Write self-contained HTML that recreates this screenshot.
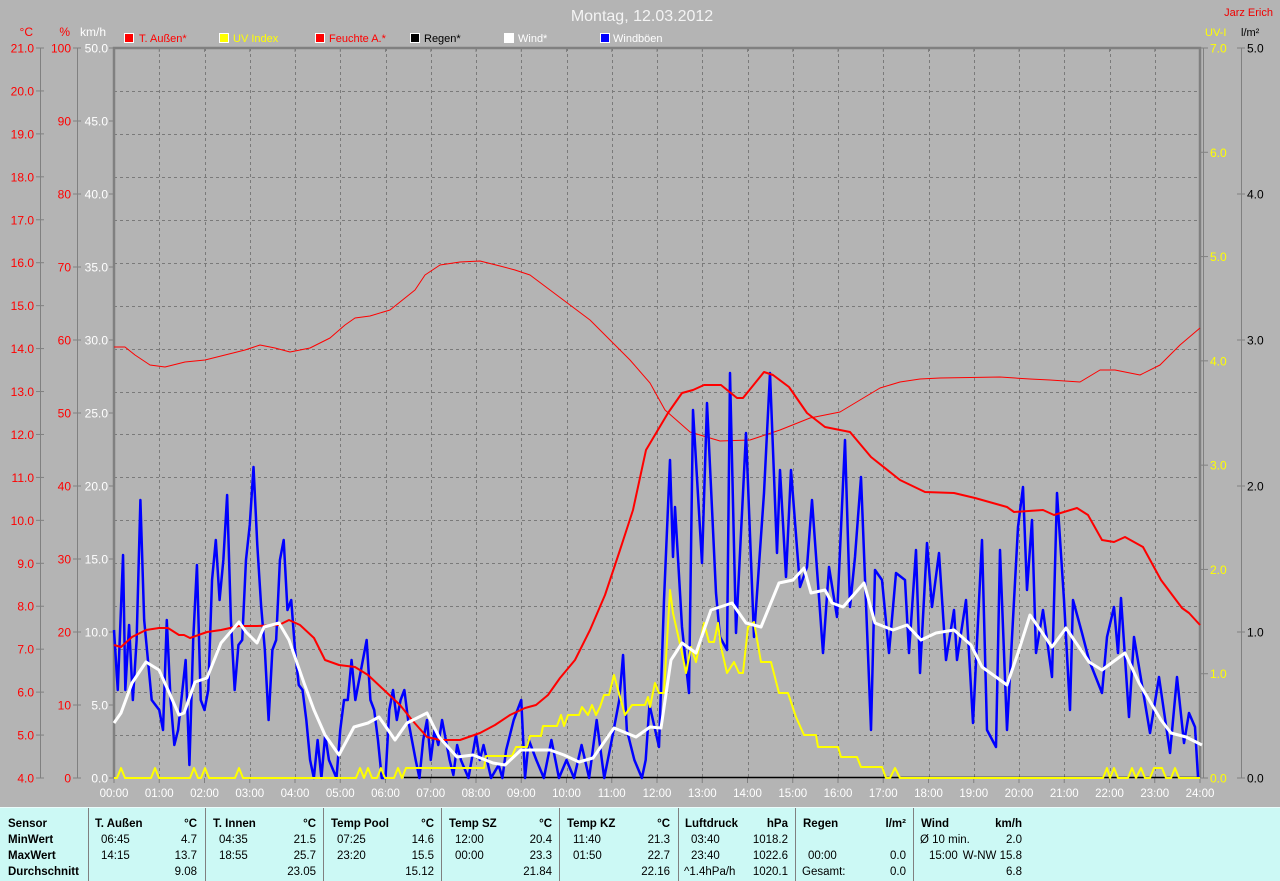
<!DOCTYPE html>
<html><head><meta charset="utf-8"><style>
html,body{margin:0;padding:0;background:#b4b4b4;width:1280px;height:881px;overflow:hidden}
svg{display:block;font-family:"Liberation Sans",Arial,sans-serif}
</style></head><body>
<svg id="s" width="1280" height="881" viewBox="0 0 1280 881" xmlns="http://www.w3.org/2000/svg">
<rect width="1280" height="881" fill="#b4b4b4"/>
<text x="642" y="21" fill="#f4f4f4" font-size="16" text-anchor="middle">Montag, 12.03.2012</text>
<text x="1273" y="16" fill="#f00000" font-size="11" text-anchor="end">Jarz Erich</text>
<g font-size="12">
<text x="33" y="36" fill="#f00" text-anchor="end">°C</text>
<text x="70" y="36" fill="#f00" text-anchor="end">%</text>
<text x="106" y="36" fill="#fff" text-anchor="end">km/h</text>
<text x="1205" y="36" fill="#ff0" font-size="11">UV-I</text>
<text x="1241" y="36" fill="#000" font-size="11">l/m²</text>
</g>
<g font-size="11">
<rect x="124.5" y="33.5" width="9" height="9" fill="#f00" stroke="#fff"/><text x="139" y="42" fill="#f00">T. Außen*</text>
<rect x="219.5" y="33.5" width="9" height="9" fill="#ff0" stroke="#fff"/><text x="233" y="42" fill="#ff0">UV Index</text>
<rect x="315.5" y="33.5" width="9" height="9" fill="#f00" stroke="#fff"/><text x="329" y="42" fill="#f00">Feuchte A.*</text>
<rect x="410.5" y="33.5" width="9" height="9" fill="#000" stroke="#fff"/><text x="424" y="42" fill="#000">Regen*</text>
<rect x="504.5" y="33.5" width="9" height="9" fill="#fff" stroke="#fff"/><text x="518" y="42" fill="#fff">Wind*</text>
<rect x="600.5" y="33.5" width="9" height="9" fill="#00f" stroke="#fff"/><text x="613" y="42" fill="#fff">Windböen</text>
</g>
<g id="grid" stroke="#7a7a7a" stroke-dasharray="3,3" stroke-width="1"></g>
<g id="axes"></g>
<g id="data" fill="none" stroke-linejoin="round"></g>
<rect x="0" y="807" width="1280" height="74" fill="#ccf9f5"/>
<line x1="0" y1="807.5" x2="1280" y2="807.5" stroke="#eafcfb"/>
<g id="tbl" font-size="11.5"></g>
</svg>
<script>
var NS="http://www.w3.org/2000/svg";
function el(p,t,a,txt){var e=document.createElementNS(NS,t);for(var k in a)e.setAttribute(k,a[k]);if(txt!=null)e.textContent=txt;document.getElementById(p).appendChild(e);return e;}
var X0=114,X1=1200,Y0=48,Y1=778;
function hx(h){return X0+h*(X1-X0)/24;}
for(var i=1;i<24;i++){var x=Math.round(hx(i))+0.5;el('grid','line',{x1:x,y1:Y0,x2:x,y2:Y1});}
for(var i=1;i<17;i++){var y=Math.round(Y0+i*730/17)+0.5;el('grid','line',{x1:X0,y1:y,x2:X1,y2:y});}
var A='axes';
el(A,'line',{x1:40.5,y1:Y0,x2:40.5,y2:Y1,stroke:'#808080'});
el(A,'line',{x1:77.5,y1:Y0,x2:77.5,y2:Y1,stroke:'#808080'});
el(A,'line',{x1:1241.5,y1:Y0,x2:1241.5,y2:Y1,stroke:'#808080'});
el(A,'line',{x1:1203.5,y1:Y0,x2:1203.5,y2:Y1,stroke:'#808080'});
el(A,'polyline',{points:'114,778 114,48 1200,48 1200,778',fill:'none',stroke:'#808080','stroke-width':2.5});
for(var i=0;i<=17;i++){var y=Y0+i*730/17;var v=(21-i).toFixed(1);
 el(A,'line',{x1:36,y1:y,x2:44,y2:y,stroke:'#808080'});
 el(A,'text',{x:34,y:y+4.5,fill:'#f00','font-size':12,'text-anchor':'end'},v);}
for(var i=0;i<=10;i++){var y=Y0+i*73;
 el(A,'line',{x1:73,y1:y,x2:81,y2:y,stroke:'#808080'});
 el(A,'text',{x:71,y:y+4.5,fill:'#f00','font-size':12,'text-anchor':'end'},String(100-i*10));
 el(A,'line',{x1:109,y1:y,x2:114,y2:y,stroke:'#808080'});
 el(A,'text',{x:108,y:y+4.5,fill:'#fff','font-size':12,'text-anchor':'end'},(50-i*5).toFixed(1));}
for(var i=0;i<=7;i++){var y=Y0+i*730/7;
 el(A,'line',{x1:1201,y1:y,x2:1208,y2:y,stroke:'#808080'});
 el(A,'text',{x:1210,y:y+4.5,fill:'#ff0','font-size':12},(7-i).toFixed(1));}
for(var i=0;i<=5;i++){var y=Y0+i*146;
 el(A,'line',{x1:1237,y1:y,x2:1245,y2:y,stroke:'#808080'});
 el(A,'text',{x:1247,y:y+4.5,fill:'#000','font-size':12},(5-i).toFixed(1));}
for(var i=0;i<=24;i++){var x=hx(i);
 el(A,'line',{x1:x,y1:48,x2:x,y2:52,stroke:'#808080'});
 el(A,'line',{x1:x,y1:778,x2:x,y2:783,stroke:'#808080'});
 el(A,'text',{x:x,y:797,fill:'#fff','font-size':11.5,'text-anchor':'middle'},(i<10?'0':'')+i+':00');}
function pl(pts,col,w){el('data','polyline',{points:pts.map(function(p){return p.join(',')}).join(' '),stroke:col,'stroke-width':w});}
function H(h,m){return hx(h+m/60);}
var hum=[[114,347],[125,347],[135,355],[150,365],[165,367],[185,362],[205,360],[225,355],[245,350],[260,345],[275,348],[290,352],[310,348],[330,338],[345,325],[355,318],[370,316],[390,310],[405,298],[415,290],[425,275],[440,265],[460,262],[480,261],[500,266],[515,270],[530,275],[550,290],[570,305],[590,320],[610,340],[630,360],[650,383],[665,410],[690,432],[720,441],[750,440],[780,430],[810,418],[840,412],[860,400],[880,388],[900,382],[920,379],[940,378],[1000,377],[1030,379],[1050,380],[1080,382],[1100,370],[1115,370],[1140,375],[1160,365],[1180,345],[1200,328]];
pl(hum,'#f00',1);
el('data','line',{x1:404,y1:777.5,x2:1200,y2:777.5,stroke:'#000','stroke-width':1.5});
var gm=[[0,0,630],[0,5,690],[0,12,555],[0,15,690],[0,20,625],[0,25,700],[0,30,640],[0,35,500],[0,40,620],[0,50,700],[1,0,710],[1,5,730],[1,10,620],[1,15,700],[1,20,745],[1,25,730],[1,35,660],[1,40,765],[1,45,640],[1,50,565],[1,55,700],[2,0,710],[2,5,690],[2,10,580],[2,15,540],[2,20,600],[2,25,560],[2,30,495],[2,35,620],[2,40,690],[2,45,645],[2,50,640],[2,55,560],[3,0,525],[3,5,467],[3,10,545],[3,15,605],[3,20,650],[3,25,720],[3,30,650],[3,35,640],[3,40,560],[3,45,540],[3,50,610],[3,55,600],[4,0,650],[4,5,685],[4,10,690],[4,15,720],[4,20,760],[4,25,778],[4,30,740],[4,35,778],[4,40,735],[4,45,760],[4,55,778],[5,0,730],[5,5,700],[5,10,700],[5,15,660],[5,20,700],[5,30,660],[5,35,640],[5,40,700],[5,45,710],[5,50,740],[5,55,778],[6,0,778],[6,5,710],[6,10,690],[6,15,720],[6,20,700],[6,25,690],[6,30,720],[6,40,760],[6,45,778],[6,50,740],[6,55,720],[7,0,760],[7,5,730],[7,10,745],[7,15,720],[7,25,760],[7,30,775],[7,35,745],[7,40,760],[7,50,778],[8,0,735],[8,5,760],[8,10,745],[8,20,778],[8,30,765],[8,35,778],[8,40,750],[8,50,720],[9,0,700],[9,5,778],[9,10,740],[9,20,760],[9,30,778],[9,40,740],[9,50,778],[10,0,760],[10,10,778],[10,20,745],[10,30,778],[10,40,720],[10,50,778],[11,0,740],[11,10,700],[11,15,655],[11,20,730],[11,30,760],[11,40,778],[11,45,760],[11,50,705]];
var gust=gm.map(function(a){return [H(a[0],a[1]),a[2]];});
gust=gust.concat([[650,707],[659,747],[664,600],[670,460],[673,557],[675,507],[682,627],[689,693],[693,410],[702,563],[707,403],[716,593],[720,637],[727,650],[730,373],[736,633],[746,433],[754,637],[764,493],[770,373],[777,553],[780,470],[786,577],[791,470],[800,587],[807,567],[812,500],[823,653],[829,567],[837,617],[845,440],[850,607],[855,557],[861,477],[871,730],[875,570],[882,580],[889,653],[896,573],[905,580],[909,653],[916,550],[920,673],[927,543],[932,607],[939,553],[946,660],[954,610],[957,660],[966,600],[973,723],[982,540],[987,730],[996,747],[1000,550],[1007,730],[1018,527],[1023,487],[1027,590],[1032,520],[1036,653],[1043,610],[1052,677],[1057,493],[1064,600],[1070,710],[1073,600],[1082,633],[1089,660],[1102,693],[1107,637],[1114,607],[1118,653],[1121,598],[1129,717],[1134,637],[1150,733],[1159,677],[1170,753],[1177,677],[1184,743],[1189,713],[1195,727],[1198,777]]);
pl(gust,'#0000ff',2.5);
var uv=[[114,778]];
[121,155,194,205,239,360,368,381,398].forEach(function(x){uv.push([x-4,778],[x,768],[x+4,778]);});
uv=uv.concat([[406,768],[484,768],[486,756],[512,756],[516,747],[527,747],[530,736],[541,736],[543,726],[557,726],[561,715],[564,726],[568,715],[579,715],[582,707],[588,715],[592,705],[596,715],[600,707],[604,695],[609,695],[614,675],[625,715],[632,705],[645,705],[648,697],[650,707],[655,683],[659,693],[664,693],[670,590],[673,613],[682,653],[686,673],[691,647],[696,662],[704,623],[709,642],[714,642],[718,623],[721,647],[727,673],[734,662],[739,673],[743,673],[748,627],[754,622],[761,662],[771,662],[779,693],[788,693],[796,717],[804,735],[816,735],[818,747],[838,747],[841,757],[857,757],[861,767],[882,767],[886,778],[890,778],[895,768],[900,778],[1103,778],[1107,768],[1110,778],[1114,768],[1118,778],[1128,778],[1132,768],[1136,778],[1141,768],[1145,778],[1150,778],[1154,768],[1162,768],[1166,778],[1171,778],[1175,768],[1179,778],[1200,778]]);
pl(uv,'#ffff00',2);
var tmp=[[114,645],[121,647],[132,637],[146,630],[159,628],[168,628],[179,635],[184,635],[190,638],[207,632],[221,630],[239,626],[257,626],[279,625],[289,620],[300,625],[314,638],[325,660],[339,665],[355,667],[368,675],[384,690],[400,705],[412,720],[427,737],[440,740],[460,740],[480,733],[495,725],[510,715],[525,708],[536,705],[548,695],[560,678],[575,660],[590,630],[605,595],[620,550],[633,510],[646,450],[668,413],[682,393],[693,390],[704,385],[721,385],[737,398],[743,398],[764,372],[773,375],[789,387],[807,413],[825,427],[850,432],[871,457],[900,480],[925,492],[954,493],[975,498],[1007,507],[1014,512],[1043,510],[1054,515],[1077,508],[1088,515],[1102,540],[1114,542],[1125,537],[1143,547],[1161,580],[1182,608],[1189,613],[1200,625]];
pl(tmp,'#f00',2);
var wd=[[114,723],[121,713],[132,683],[146,662],[159,670],[168,690],[179,715],[184,713],[195,682],[207,678],[221,643],[239,622],[246,632],[257,643],[264,627],[279,623],[289,640],[304,683],[314,710],[325,735],[339,755],[354,727],[368,723],[379,717],[395,740],[407,723],[427,713],[439,737],[457,757],[473,755],[493,763],[505,765],[521,750],[550,750],[564,755],[579,762],[593,758],[614,728],[636,737],[650,727],[661,728],[671,660],[682,643],[696,653],[711,610],[732,603],[746,623],[761,627],[779,583],[793,580],[804,568],[811,593],[825,590],[832,603],[843,607],[864,583],[875,623],[893,630],[907,625],[921,640],[936,633],[954,630],[971,645],[982,667],[996,677],[1007,685],[1018,653],[1030,615],[1052,647],[1066,628],[1089,662],[1102,670],[1125,653],[1139,683],[1161,720],[1171,733],[1186,737],[1202,745]];
pl(wd,'#fff',3);
var T='tbl';
function t(x,y,s,b,end){el(T,'text',{x:x,y:y,fill:'#000','font-weight':b?'bold':'normal','text-anchor':end?'end':'start'},s);}
[88,205,323,441,559,678,795,913].forEach(function(x){el(T,'line',{x1:x+0.5,y1:808,x2:x+0.5,y2:881,stroke:'#808080'});});
var R=[827,843,859,875];
t(8,R[0],'Sensor',1);t(8,R[1],'MinWert',1);t(8,R[2],'MaxWert',1);t(8,R[3],'Durchschnitt',1);
var cols=[[95,197,'T. Außen','°C',['06:45','4.7'],['14:15','13.7'],['','9.08']],
[213,316,'T. Innen','°C',['04:35','21.5'],['18:55','25.7'],['','23.05']],
[331,434,'Temp Pool','°C',['07:25','14.6'],['23:20','15.5'],['','15.12']],
[449,552,'Temp SZ','°C',['12:00','20.4'],['00:00','23.3'],['','21.84']],
[567,670,'Temp KZ','°C',['11:40','21.3'],['01:50','22.7'],['','22.16']],
[685,788,'Luftdruck','hPa',['03:40','1018.2'],['23:40','1022.6'],['^1.4hPa/h','1020.1']],
[803,906,'Regen','l/m²',['',''],['00:00','0.0'],['Gesamt:','0.0']],
[921,1022,'Wind','km/h',['Ø 10 min.','2.0'],['15:00','W-NW 15.8'],['','6.8']]];
cols.forEach(function(c){t(c[0],R[0],c[2],1);t(c[1],R[0],c[3],1,1);
 for(var r=0;r<3;r++){var d=c[4+r];var lx=c[0]+6;
  if(d[0]==='^1.4hPa/h'||d[0]==='Gesamt:'||d[0]==='Ø 10 min.')lx=c[0]-1;
  if(c[2]==='Regen'&&d[0]==='00:00')lx=c[0]+5;
  if(c[2]==='Wind'&&d[0]==='15:00')lx=c[0]+8;
  if(d[0])t(lx,R[1+r],d[0],0);if(d[1])t(c[1],R[1+r],d[1],0,1);}});
</script>
</body></html>
